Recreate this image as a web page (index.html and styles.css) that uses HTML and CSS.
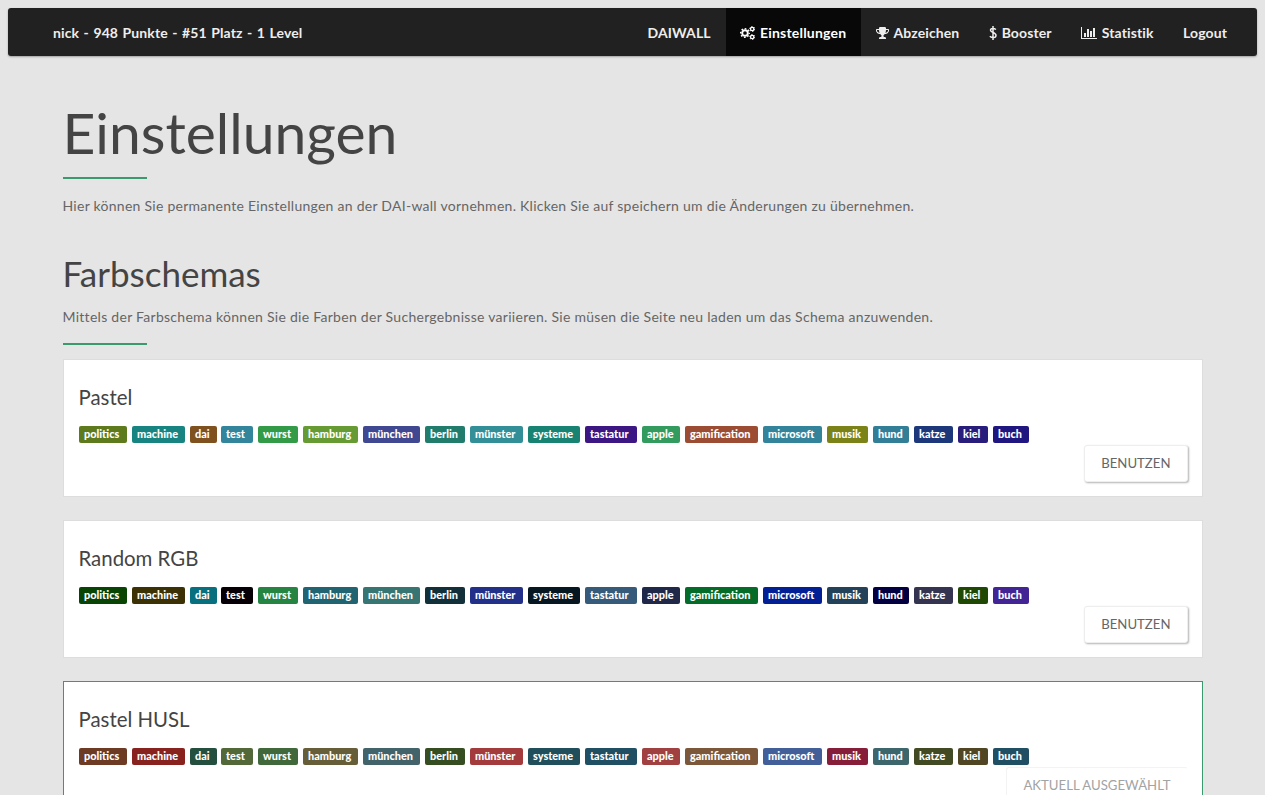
FILE: index.html
```
<!DOCTYPE html>
<html lang="de">
<head>
<meta charset="utf-8">
<title>Einstellungen</title>
<link rel="stylesheet" href="styles.css">
</head>
<body>
<nav class="navbar">
  <span class="navbar-text">nick - 948 Punkte - #51 Platz - 1 Level</span>
  <div class="navbar-links">
    <a class="nav-link">DAIWALL</a>
    <a class="nav-link active"><svg class="icon" width="15" height="14" viewBox="0 0 15 14"><g fill="none" stroke="currentColor"><circle cx="5" cy="7" r="2.8" stroke-width="1.9"/><circle cx="5" cy="7" r="4.3" stroke-width="1.5" stroke-dasharray="1.7 1.677" stroke-dashoffset=".85"/><circle cx="12.2" cy="3" r="1.7" stroke-width="1.3"/><circle cx="12.2" cy="3" r="2.5" stroke-width="1" stroke-dasharray="1.3 1.318"/><circle cx="12.2" cy="11" r="1.7" stroke-width="1.3"/><circle cx="12.2" cy="11" r="2.5" stroke-width="1" stroke-dasharray="1.3 1.318"/></g></svg><span>Einstellungen</span></a>
    <a class="nav-link"><svg class="icon" width="13" height="14" viewBox="64 0 1664 1792"><path fill="currentColor" d="M522 883q-74-162-74-371h-256v96q0 78 94.5 162t235.5 113zm1078-275v-96h-256q0 209-74 371 141-29 235.5-113t94.5-162zm128-128v128q0 71-41.5 143t-112 130-173 97.5-215.5 44.5q-42 54-95 95-38 34-52.5 72.5t-14.5 89.5q0 54 30.5 91t97.5 37q75 0 133.5 45.5t58.5 114.5v64q0 14-9 23t-23 9h-832q-14 0-23-9t-9-23v-64q0-69 58.5-114.5t133.5-45.5q67 0 97.5-37t30.5-91q0-51-14.5-89.5t-52.5-72.5q-53-41-95-95-113-5-215.5-44.5t-173-97.5-112-130-41.5-143v-128q0-40 28-68t68-28h288v-96q0-66 47-113t113-47h576q66 0 113 47t47 113v96h288q40 0 68 28t28 68z"/></svg><span>Abzeichen</span></a>
    <a class="nav-link"><svg class="icon" width="8" height="14" viewBox="0 0 8 14"><path fill="none" stroke="currentColor" stroke-width="1.5" d="M4 0v14M7 3.500C5 2.100 1.500 2 1.500 4.200C1.500 6.800 7 6.300 7 9.500C7 12 3 12.300 .8 10.300"/></svg><span>Booster</span></a>
    <a class="nav-link"><svg class="icon" width="16" height="14" viewBox="0 0 2048 1792"><path fill="currentColor" d="M640 896v512h-256v-512h256zm384-512v1024h-256v-1024h256zm1024 1152v128h-2048v-1536h128v1408h1920zm-640-896v768h-256v-768h256zm384-384v1152h-256v-1152h256z"/></svg><span>Statistik</span></a>
    <a class="nav-link">Logout</a>
  </div>
</nav>
<main class="container">
  <h1 class="page-title">Einstellungen</h1>
  <hr class="rule">
  <p class="lead">Hier können Sie permanente Einstellungen an der DAI-wall vornehmen. Klicken Sie auf speichern um die Änderungen zu übernehmen.</p>
  <h2 class="section-title">Farbschemas</h2>
  <p class="section-text">Mittels der Farbschema können Sie die Farben der Suchergebnisse variieren. Sie müsen die Seite neu laden um das Schema anzuwenden.</p>
  <hr class="rule rule-section">
  <div id="schemes" class="schemes"></div>
</main>
<script src="script.js"></script>
</body>
</html>
```
FILE: styles.css
```
* { box-sizing: border-box; }
html { overflow: hidden; }
body {
  margin: 0;
  height: 795px;
  overflow: hidden;
  background: #e5e5e5;
  color: #666;
  font-family: Lato, "Open Sans", sans-serif;
  font-size: 14px;
  line-height: 20px;
}
.navbar {
  display: flex;
  justify-content: space-between;
  height: 48px;
  margin: 8px 8px 0;
  padding: 0 15px 0 45px;
  background: #212121;
  border-radius: 3px;
  box-shadow: 0 1px 2px rgba(0, 0, 0, .3);
  color: #eee;
  font-weight: 700;
  letter-spacing: .1px;
  overflow: hidden;
}
.navbar-text { padding-top: 15px; word-spacing: 1px; }
.navbar-links { display: flex; }
.nav-link { display: flex; gap: 4.7px; padding: 15px 14.8px 0; white-space: nowrap; }
.nav-link:last-child { padding-right: 15px; }
.nav-link.active { background: #080808; color: #fff; letter-spacing: .2px; }
.icon { flex: none; margin-top: 3px; }
.container { width: 1140px; margin: 0 auto; }
.page-title {
  margin: 45px 0 13px;
  font-size: 57px;
  line-height: 63px;
  font-weight: 400;
  color: #444;
}
.rule { width: 84px; height: 2px; margin: 0; border: 0; background: #3a9a6e; }
.lead { margin: 17px 0 0; letter-spacing: .265px; }
.section-title {
  margin: 36px 0 0;
  font-size: 35px;
  line-height: 42px;
  font-weight: 400;
  color: #444;
}
.section-text { margin: 13px 0 16px; letter-spacing: .28px; }
.schemes { display: flex; flex-direction: column; gap: 23px; margin-top: 14px; }
.card {
  height: 138px;
  padding: 23px 14px 0 15px;
  background: #fff;
  border: 1px solid #ddd;
}
.card.selected { border-color: #3a9a6e; }
.card-title { margin: 0; font-size: 20.4px; line-height: 28px; font-weight: 400; color: #444; }
.tags { display: flex; margin-top: 15px; height: 17px; }
.tag {
  height: 17px;
  margin-right: 5px;
  padding-left: 5.5px;
  border-radius: 2px;
  color: #fff;
  font-size: 10.9px;
  line-height: 16px;
  font-weight: 900;
  white-space: nowrap;
}
.tag.tight { margin-right: 4px; }
.actions { display: flex; justify-content: flex-end; margin-top: 2px; }
.button {
  height: 37px;
  padding: 0 16px 1px;
  border: 1px solid #eee;
  border-radius: 3px;
  background: #fff;
  box-shadow: 1px 1px 2px rgba(0, 0, 0, .3);
  color: #666;
  font: 400 13.2px/34px Lato, sans-serif;
  letter-spacing: 0;
  text-transform: uppercase;
}
.button:disabled { color: #a3a3a3; box-shadow: none; border-color: #f3f3f3 #fff #fff #f3f3f3; }
```
FILE: script.js
```
const words = [
  ["politics", 48], ["machine", 53], ["dai", 27], ["test", 32], ["wurst", 40],
  ["hamburg", 55], ["münchen", 57], ["berlin", 40], ["münster", 53], ["systeme", 52],
  ["tastatur", 52], ["apple", 38], ["gamification", 73], ["microsoft", 59],
  ["musik", 41], ["hund", 36], ["katze", 39], ["kiel", 30], ["buch", 36]
];
const schemes = [
  { name: "Pastel", colors: "#5d7b1c #188481 #7e511f #33859b #339b48 #669b33 #3f4890 #217c6b #338f97 #188372 #3c1783 #339b5d #9b4c33 #33839b #7b8318 #337e97 #1c387b #281d7b #201680" },
  { name: "Random RGB", colors: "#084504 #3c3105 #06707f #060006 #268443 #206472 #377573 #123039 #23308a #071722 #365b7a #1f2848 #046b28 #031f96 #234158 #030042 #353450 #204805 #422495" },
  { name: "Pastel HUSL", selected: true, colors: "#6d3a24 #87221f #244f3e #536838 #41683a #665e38 #43636a #354d20 #a33a3b #204e5a #204e62 #a04040 #7d5739 #435f9a #861d39 #3d656c #414a22 #504623 #204e62" }
];
const list = document.getElementById("schemes");
for (const scheme of schemes) {
  const colors = scheme.colors.split(" ");
  const card = document.createElement("section");
  card.className = "card" + (scheme.selected ? " selected" : "");
  const tags = words.map(([word, width], i) =>
    `<span class="tag${word === "dai" ? " tight" : ""}" style="width:${width}px;background:${colors[i]}">${word}</span>`).join("");
  card.innerHTML = `<h3 class="card-title">${scheme.name}</h3><div class="tags">${tags}</div>
    <div class="actions"><button class="button"${scheme.selected ? " disabled" : ""}>${scheme.selected ? "Aktuell ausgewählt" : "Benutzen"}</button></div>`;
  list.append(card);
}
```
